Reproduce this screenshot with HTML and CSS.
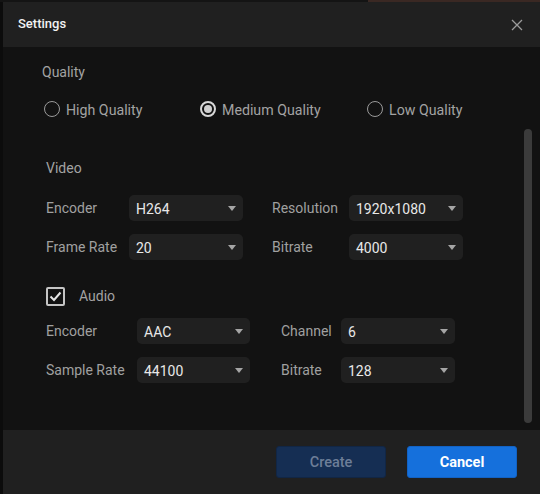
FILE: index.html
```html
<!DOCTYPE html>
<html>
<head>
<meta charset="utf-8">
<link rel="stylesheet" href="styles.css">
</head>
<body>
<div class="top-strip"><div class="strip-dark"></div><div class="strip-photo"></div></div>
<div class="frame">
  <div class="left-edge"></div>
  <div class="dialog">
    <div class="header">
      <span class="title">Settings</span>
      <svg class="close" width="12" height="12" viewBox="0 0 12 12"><path d="M1 1 L11 11 M11 1 L1 11" stroke="#9b9b9b" stroke-width="1.3" fill="none"/></svg>
    </div>
    <div class="body">
      <div class="content">
        <div class="section-title q-title">Quality</div>
        <div class="radios">
          <div class="radio-item w1"><span class="radio"></span><span class="rlabel">High Quality</span></div>
          <div class="radio-item w2"><span class="radio checked"></span><span class="rlabel">Medium Quality</span></div>
          <div class="radio-item"><span class="radio"></span><span class="rlabel">Low Quality</span></div>
        </div>
        <div class="section-title v-title">Video</div>
        <div class="grid video-grid">
          <div class="label">Encoder</div>
          <div class="select"><span>H264</span><span class="arrow"></span></div>
          <div class="label second">Resolution</div>
          <div class="select"><span>1920x1080</span><span class="arrow"></span></div>
          <div class="label">Frame Rate</div>
          <div class="select"><span>20</span><span class="arrow"></span></div>
          <div class="label second">Bitrate</div>
          <div class="select"><span>4000</span><span class="arrow"></span></div>
        </div>
        <div class="audio-row">
          <span class="checkbox"><svg width="15" height="15" viewBox="0 0 15 15"><path d="M2.5 7.5 L6 11 L12.5 3.5" stroke="#e6e6e6" stroke-width="2" fill="none"/></svg></span>
          <span class="audio-label">Audio</span>
        </div>
        <div class="grid audio-grid">
          <div class="label">Encoder</div>
          <div class="select"><span>AAC</span><span class="arrow"></span></div>
          <div class="label second">Channel</div>
          <div class="select"><span>6</span><span class="arrow"></span></div>
          <div class="label">Sample Rate</div>
          <div class="select"><span>44100</span><span class="arrow"></span></div>
          <div class="label second">Bitrate</div>
          <div class="select"><span>128</span><span class="arrow"></span></div>
        </div>
      </div>
      <div class="scroll-track"><div class="scroll-thumb"></div></div>
    </div>
    <div class="footer">
      <button class="btn btn-create">Create</button>
      <button class="btn btn-cancel">Cancel</button>
    </div>
  </div>
</div>
</body>
</html>
```
FILE: styles.css
```css
html, body {
  margin: 0;
  padding: 0;
  background: #0e0e0e;
  overflow: hidden;
  width: 540px;
  height: 494px;
  font-family: Roboto, "Noto Sans", sans-serif;
}
.top-strip {
  display: flex;
  height: 2px;
}
.strip-dark {
  width: 368px;
  background: #141414;
}
.strip-photo {
  flex: 1;
  background: #3a2823;
}
.frame {
  display: flex;
  height: 492px;
}
.left-edge {
  width: 3px;
  background: #0c0c0c;
}
.dialog {
  flex: 1;
  display: flex;
  flex-direction: column;
}
.header {
  height: 45px;
  background: #202020;
  display: flex;
  align-items: center;
  justify-content: space-between;
  padding: 0 17px 0 15px;
}
.title {
  color: #f2f2f2;
  font-size: 13px;
  font-weight: 500;
  position: relative;
  top: -1px;
}
.close {
  display: block;
}
.body {
  height: 383px;
  background: #121212;
  display: flex;
}
.content {
  flex: 1;
  padding: 15px 0 0 39px;
}
.section-title {
  color: #a3a3a3;
  font-size: 14px;
  line-height: 20px;
  height: 20px;
}
.radios {
  display: flex;
  margin-top: 17px;
  padding-left: 2px;
  height: 20px;
  align-items: center;
}
.radio-item {
  display: flex;
  align-items: center;
}
.radio-item.w1 { width: 156px; }
.radio-item.w2 { width: 167px; }
.radio {
  width: 16px;
  height: 16px;
  box-sizing: border-box;
  border: 1.5px solid #9a9a9a;
  border-radius: 50%;
  margin-right: 6px;
  display: flex;
  align-items: center;
  justify-content: center;
}
.radio.checked {
  border: 2px solid #d8d8d8;
}
.radio.checked::after {
  content: "";
  width: 8px;
  height: 8px;
  border-radius: 50%;
  background: #cfcfcf;
}
.rlabel {
  color: #a3a3a3;
  font-size: 14.2px;
  line-height: 20px;
  position: relative;
  top: 1px;
}
.v-title {
  margin-top: 39px;
  padding-left: 4px;
}
.grid {
  display: grid;
  row-gap: 13px;
  margin-left: 4px;
  align-items: center;
}
.video-grid {
  margin-top: 17px;
  grid-template-columns: 83px 114px 106px 114px;
}
.audio-grid {
  margin-top: 12px;
  grid-template-columns: 91px 113px 91px 114px;
}
.video-grid .second { padding-left: 29px; }
.audio-grid .second { padding-left: 31px; }
.label {
  color: #a0a0a0;
  font-size: 14px;
  line-height: 20px;
  white-space: nowrap;
}
.select {
  height: 26px;
  background: #202020;
  border-radius: 5px;
  display: flex;
  align-items: center;
  justify-content: space-between;
  padding: 0 7px 0 7px;
  color: #e8e8e8;
  font-size: 14px;
}
.select span:first-child {
  position: relative;
  top: 1px;
}
.arrow {
  width: 0;
  height: 0;
  border-left: 4.5px solid transparent;
  border-right: 4.5px solid transparent;
  border-top: 5px solid #a5a5a5;
}
.audio-row {
  margin-top: 26px;
  margin-left: 4px;
  display: flex;
  align-items: center;
  height: 20px;
}
.checkbox {
  width: 19px;
  height: 19px;
  box-sizing: border-box;
  border: 2px solid #c4c4c4;
  border-radius: 2px;
  display: flex;
  align-items: center;
  justify-content: center;
}
.checkbox svg { display: block; }
.audio-label {
  margin-left: 14px;
  color: #a3a3a3;
  font-size: 14px;
  line-height: 20px;
}
.scroll-track {
  width: 8px;
  margin-right: 8px;
}
.scroll-thumb {
  margin-top: 82px;
  height: 294px;
  background: #3b3b3b;
  border-radius: 4px;
}
.footer {
  height: 64px;
  background: #202020;
  display: flex;
  justify-content: flex-end;
  align-items: flex-start;
  padding: 16px 23px 0 0;
  box-sizing: border-box;
  gap: 21px;
}
.btn {
  width: 110px;
  height: 32px;
  border-radius: 3px;
  font-family: Roboto, "Noto Sans", sans-serif;
  font-size: 14.5px;
  cursor: pointer;
}
.btn-create {
  background: #152e53;
  border: 1px solid #112645;
  color: #6d7e98;
  font-weight: 500;
}
.btn-cancel {
  background: #1570dc;
  border: 1px solid #1262c4;
  color: #ffffff;
  font-weight: 700;
}
```
